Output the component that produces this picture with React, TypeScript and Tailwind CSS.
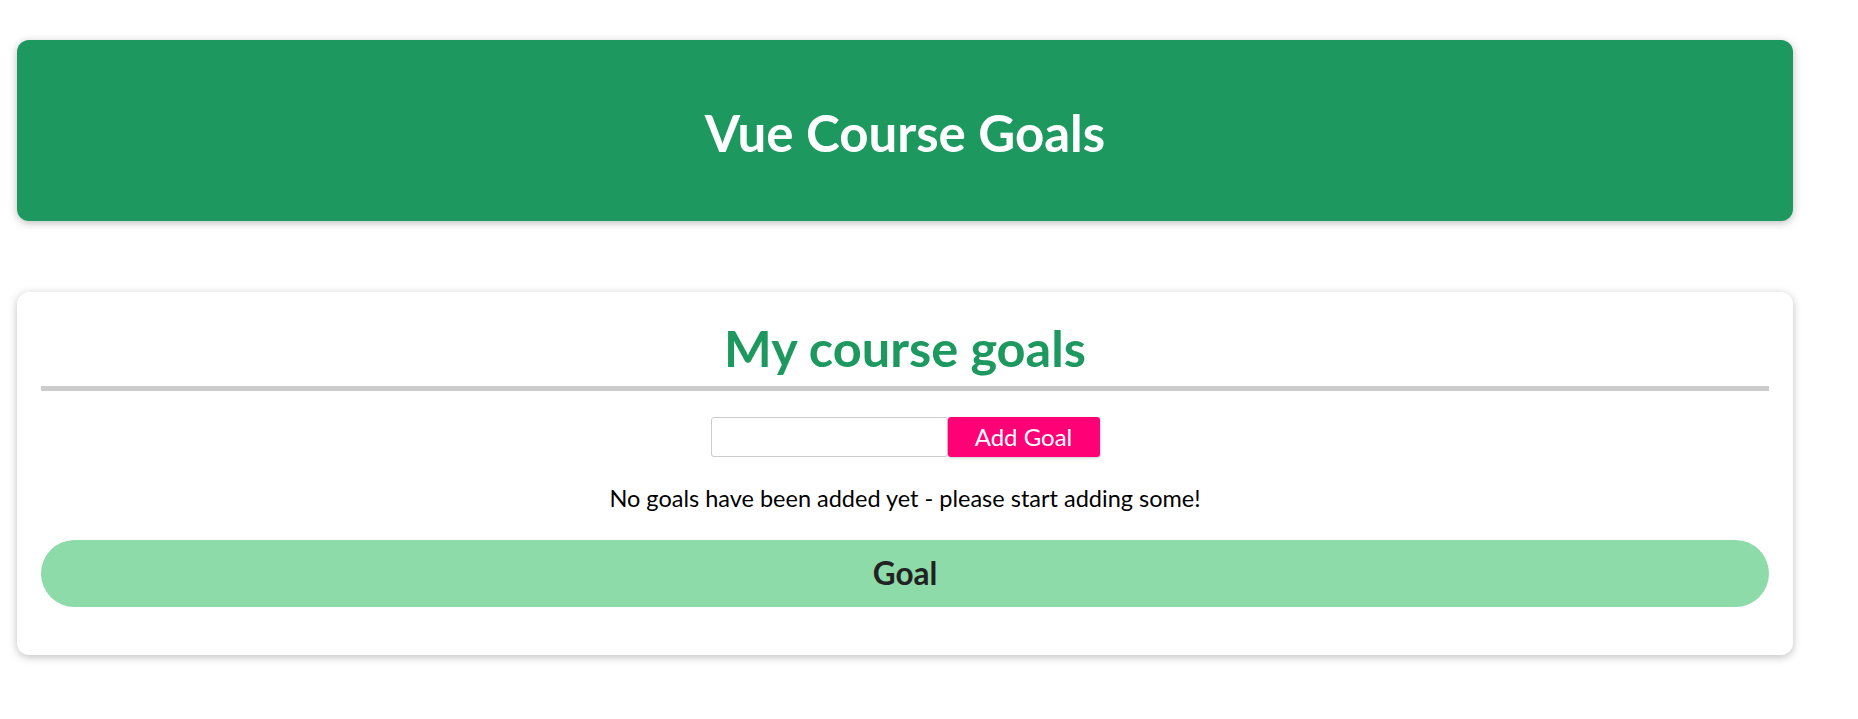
import React from "react";

export default function App() {
  return (
    <div className="min-h-screen bg-white" style={{ fontFamily: "Lato, 'Noto Sans', sans-serif" }}>
      <div className="pt-[40px] pl-[17px]">
        <header className="w-[1776px] h-[181px] rounded-[12px] bg-[#1d9960] shadow-[0_2px_8px_rgba(0,0,0,0.26)] flex items-center justify-center pt-[3px]">
          <h1 className="text-white font-bold text-[51px] leading-none">Vue Course Goals</h1>
        </header>
        <section className="mt-[71px] w-[1776px] rounded-[12px] bg-white shadow-[0_2px_8px_rgba(0,0,0,0.26)] px-[24px] pt-[31px] pb-[48px] flex flex-col items-center">
          <h2 className="text-[#1d9960] font-bold text-[50.5px] leading-none">My course goals</h2>
          <div className="mt-[12.5px] w-full h-[5px] bg-[#cccccc]" />
          <div className="mt-[26px] flex">
            <input
              type="text"
              className="w-[237px] h-[40px] border border-[#cccccc] rounded-[3px] outline-none bg-white"
            />
            <button className="w-[152px] h-[40px] bg-[#ff0077] text-white text-[24px] leading-none rounded-[3px] shadow-[0_1px_3px_rgba(0,0,0,0.2)] flex items-center justify-center">
              Add Goal
            </button>
          </div>
          <p className="mt-[25px] text-[23.5px] leading-[33px] text-black">
            No goals have been added yet - please start adding some!
          </p>
          <div className="mt-[25px] w-full h-[67px] rounded-full bg-[#8ddba8] flex items-center justify-center">
            <span className="text-[31.5px] font-bold text-[#222222] leading-none">Goal</span>
          </div>
        </section>
      </div>
    </div>
  );
}
